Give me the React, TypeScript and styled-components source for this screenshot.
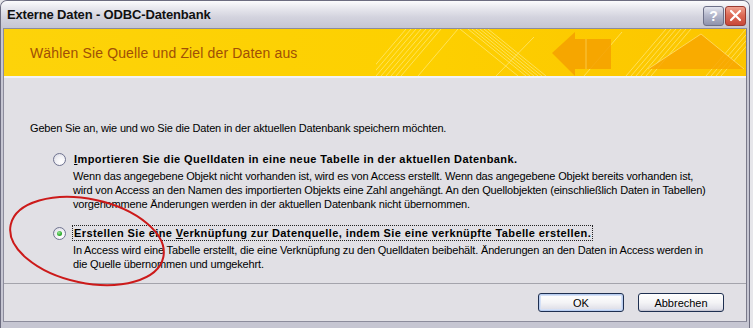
import React from 'react'
import styled, { createGlobalStyle } from 'styled-components'

const GlobalStyle = createGlobalStyle`
  html, body {
    margin: 0;
    padding: 0;
    background: #e6e6ea;
  }
  body {
    font-family: 'Liberation Sans', Arial, sans-serif;
    font-size: 11px;
    color: #000;
  }
`

const Window = styled.div`
  position: relative;
  width: 750px;
  height: 328px;
  box-sizing: border-box;
  display: flex;
  flex-direction: column;
  background: #c6c6d2;
  border: 1px solid #6d6d80;
  border-bottom: none;
  border-radius: 7px 7px 0 0;
  overflow: hidden;
`

const TitleBar = styled.div`
  height: 27px;
  flex: none;
  display: flex;
  align-items: center;
  justify-content: space-between;
  padding: 0 3px 0 6px;
  background: linear-gradient(#fcfcfd 0%, #e9e9ef 25%, #d3d3de 60%, #c6c6d3 100%);
`

const Title = styled.span`
  font-family: 'Liberation Sans', Arial, sans-serif;
  font-weight: bold;
  font-size: 13px;
  color: #111;
  letter-spacing: -0.15px;
`

const Caption = styled.div`
  display: flex;
  gap: 1px;
  padding-top: 2px;
`

const CaptionButton = styled.div<{ $kind: 'help' | 'close' }>`
  width: 21px;
  height: 20px;
  box-sizing: border-box;
  border-radius: 3px;
  border: 1px solid ${(p) => (p.$kind === 'close' ? '#9a3a30' : '#6d7088')};
  background: ${(p) =>
    p.$kind === 'close'
      ? 'linear-gradient(#f0a290 0%, #dd6a56 45%, #c8483a 100%)'
      : 'linear-gradient(#e4e6f0 0%, #b5b8cc 45%, #8f93ad 100%)'};
  display: flex;
  align-items: center;
  justify-content: center;
  color: #fff;
  font-weight: bold;
  font-size: 14px;
`

const Frame = styled.div`
  flex: 1;
  display: flex;
  flex-direction: column;
  padding: 0 2px 6px;
`

const Client = styled.div`
  flex: 1;
  display: flex;
  flex-direction: column;
  background: #e1e0e5;
  border: 1px solid #8c8c9c;
  border-right-color: #7a7a8a;
`

const Banner = styled.div`
  height: 47px;
  flex: none;
  display: flex;
  align-items: center;
  justify-content: space-between;
  background: linear-gradient(90deg, #fdd30a 0%, #fdd000 55%, #fcc500 100%);
  border-bottom: 2px solid #f3f3f6;
`

const BannerTitle = styled.span`
  font-family: 'Liberation Sans', Arial, sans-serif;
  font-size: 14px;
  letter-spacing: 0.15px;
  color: #a04f06;
  padding: 1px 0 0 26px;
`

const Body = styled.div`
  flex: 1;
  padding: 43px 20px 0 26px;
  display: flex;
  flex-direction: column;
  letter-spacing: -0.17px;
`

const Intro = styled.div`
  line-height: 14px;
  white-space: nowrap;
`

const Options = styled.div`
  display: flex;
  flex-direction: column;
  gap: 14px;
  padding: 16px 0 0 23px;
`

const OptionRow = styled.div`
  display: flex;
  align-items: center;
  gap: 7px;
  height: 16px;
`

const Radio = styled.span<{ $checked?: boolean }>`
  width: 13px;
  height: 13px;
  box-sizing: border-box;
  border-radius: 50%;
  border: 1px solid #6f7390;
  background: radial-gradient(circle at 65% 70%, #ffffff 0%, #f2f2f6 45%, #d4d4de 100%);
  display: flex;
  align-items: center;
  justify-content: center;
  flex: none;

  &::after {
    content: '';
    display: ${(p) => (p.$checked ? 'block' : 'none')};
    width: 5px;
    height: 5px;
    border-radius: 50%;
    background: radial-gradient(circle at 40% 35%, #9ee59e 0%, #33b033 55%, #1c8a1c 100%);
  }
`

const Label = styled.span<{ $focused?: boolean }>`
  font-weight: bold;
  letter-spacing: 0.4px;
  white-space: nowrap;
  line-height: 14px;
  padding: 0 1px;
  margin-left: -1px;
  border: 1px dotted ${(p) => (p.$focused ? '#222' : 'transparent')};
`

const Key = styled.span`
  text-decoration: underline;
`

const Description = styled.div`
  padding: 2px 0 0 20px;
  line-height: 14px;
  white-space: nowrap;
`

const Footer = styled.div`
  flex: none;
  height: 38px;
  border-top: 1px solid #a4a4ac;
  display: flex;
  justify-content: flex-end;
  align-items: flex-start;
  gap: 14px;
  padding: 9px 22px 0 0;
  box-sizing: border-box;
`

const Button = styled.button<{ $default?: boolean }>`
  width: 86px;
  height: 19px;
  box-sizing: border-box;
  padding: 0;
  font-family: 'Liberation Sans', Arial, sans-serif;
  font-size: 11px;
  color: #000;
  border-radius: 3px;
  border: 1px solid #1e2f50;
  background: linear-gradient(#ffffff 0%, #f4f4f6 50%, #e2e2ea 85%, #cfcfd9 100%);
  box-shadow: ${(p) =>
    p.$default ? 'inset 0 0 0 1px #b8cdf0, inset 0 0 0 2px #d4e0f6' : 'inset 0 -1px 0 #c6c6d2'};
`

const Annotation = styled.svg`
  position: absolute;
  left: 0;
  top: 0;
  pointer-events: none;
`

const BannerArt = () => (
  <svg width='370' height='47' viewBox='0 0 370 47'>
    <g stroke='#fff2a0' strokeOpacity='0.55' strokeWidth='1' fill='none'>
      {[0, 5, 10, 15, 20, 25, 30, 35].map((o) => (
        <line key={'a' + o} x1={o - 10} y1={47} x2={o + 30} y2={0} />
      ))}
      <line x1='42' y1='47' x2='82' y2='0' />
      <line x1='84' y1='0' x2='142' y2='47' />
      {[0, 4, 8, 12, 16, 20].map((o) => (
        <line key={'b' + o} x1={92 + o} y1={0} x2={150 + o} y2={47} />
      ))}
      <line x1='120' y1='47' x2='158' y2='8' />
      <line x1='208' y1='47' x2='246' y2='3' />
      {[0, 5, 10, 15, 20, 25].map((o) => (
        <line key={'c' + o} x1={250 + o} y1={47} x2={290 + o} y2={0} />
      ))}
      {[0, 5, 10, 15].map((o) => (
        <line key={'d' + o} x1={330 + o} y1={47} x2={370 + o} y2={0} />
      ))}
    </g>
    <polygon points='176,24 199,3 199,10 235,10 235,40 199,40 199,47' fill='#f5a000' fillOpacity='0.85' />
    <line x1='210' y1='10' x2='210' y2='40' stroke='#fde070' strokeOpacity='0.6' />
    <polygon points='272,40 325,5 368,40' fill='#f7a400' fillOpacity='0.8' />
    <line x1='272' y1='40' x2='325' y2='5' stroke='#ffe27a' strokeOpacity='0.7' />
    <line x1='325' y1='5' x2='368' y2='40' stroke='#ffe27a' strokeOpacity='0.7' />
  </svg>
)

const App = () => {
  return (
    <React.Fragment>
      <GlobalStyle />
      <Window>
        <TitleBar>
          <Title>Externe Daten - ODBC-Datenbank</Title>
          <Caption>
            <CaptionButton $kind='help'>?</CaptionButton>
            <CaptionButton $kind='close'>
              <svg width='13' height='13' viewBox='0 0 13 13'>
                <path d='M2 2 L11 11 M11 2 L2 11' stroke='#fff' strokeWidth='2.2' strokeLinecap='round' />
              </svg>
            </CaptionButton>
          </Caption>
        </TitleBar>
        <Frame>
          <Client>
            <Banner>
              <BannerTitle>Wählen Sie Quelle und Ziel der Daten aus</BannerTitle>
              <BannerArt />
            </Banner>
            <Body>
              <Intro>Geben Sie an, wie und wo Sie die Daten in der aktuellen Datenbank speichern möchten.</Intro>
              <Options>
                <div>
                  <OptionRow>
                    <Radio />
                    <Label>
                      <Key>I</Key>mportieren Sie die Quelldaten in eine neue Tabelle in der aktuellen Datenbank.
                    </Label>
                  </OptionRow>
                  <Description>
                    <div>Wenn das angegebene Objekt nicht vorhanden ist, wird es von Access erstellt. Wenn das angegebene Objekt bereits vorhanden ist,</div>
                    <div>wird von Access an den Namen des importierten Objekts eine Zahl angehängt. An den Quellobjekten (einschließlich Daten in Tabellen)</div>
                    <div>vorgenommene Änderungen werden in der aktuellen Datenbank nicht übernommen.</div>
                  </Description>
                </div>
                <div>
                  <OptionRow>
                    <Radio $checked />
                    <Label $focused>
                      Erstellen Sie eine <Key>V</Key>erknüpfung zur Datenquelle, indem Sie eine verknüpfte Tabelle erstellen.
                    </Label>
                  </OptionRow>
                  <Description>
                    <div>In Access wird eine Tabelle erstellt, die eine Verknüpfung zu den Quelldaten beibehält. Änderungen an den Daten in Access werden in</div>
                    <div>die Quelle übernommen und umgekehrt.</div>
                  </Description>
                </div>
              </Options>
            </Body>
            <Footer>
              <Button $default>OK</Button>
              <Button>Abbrechen</Button>
            </Footer>
          </Client>
        </Frame>
        <Annotation width='753' height='328' viewBox='0 0 753 328'>
          <ellipse cx='86' cy='240' rx='78' ry='42' transform='rotate(12 86 240)' fill='none' stroke='#cc1a1a' strokeWidth='2' />
        </Annotation>
      </Window>
    </React.Fragment>
  )
}

export default App
